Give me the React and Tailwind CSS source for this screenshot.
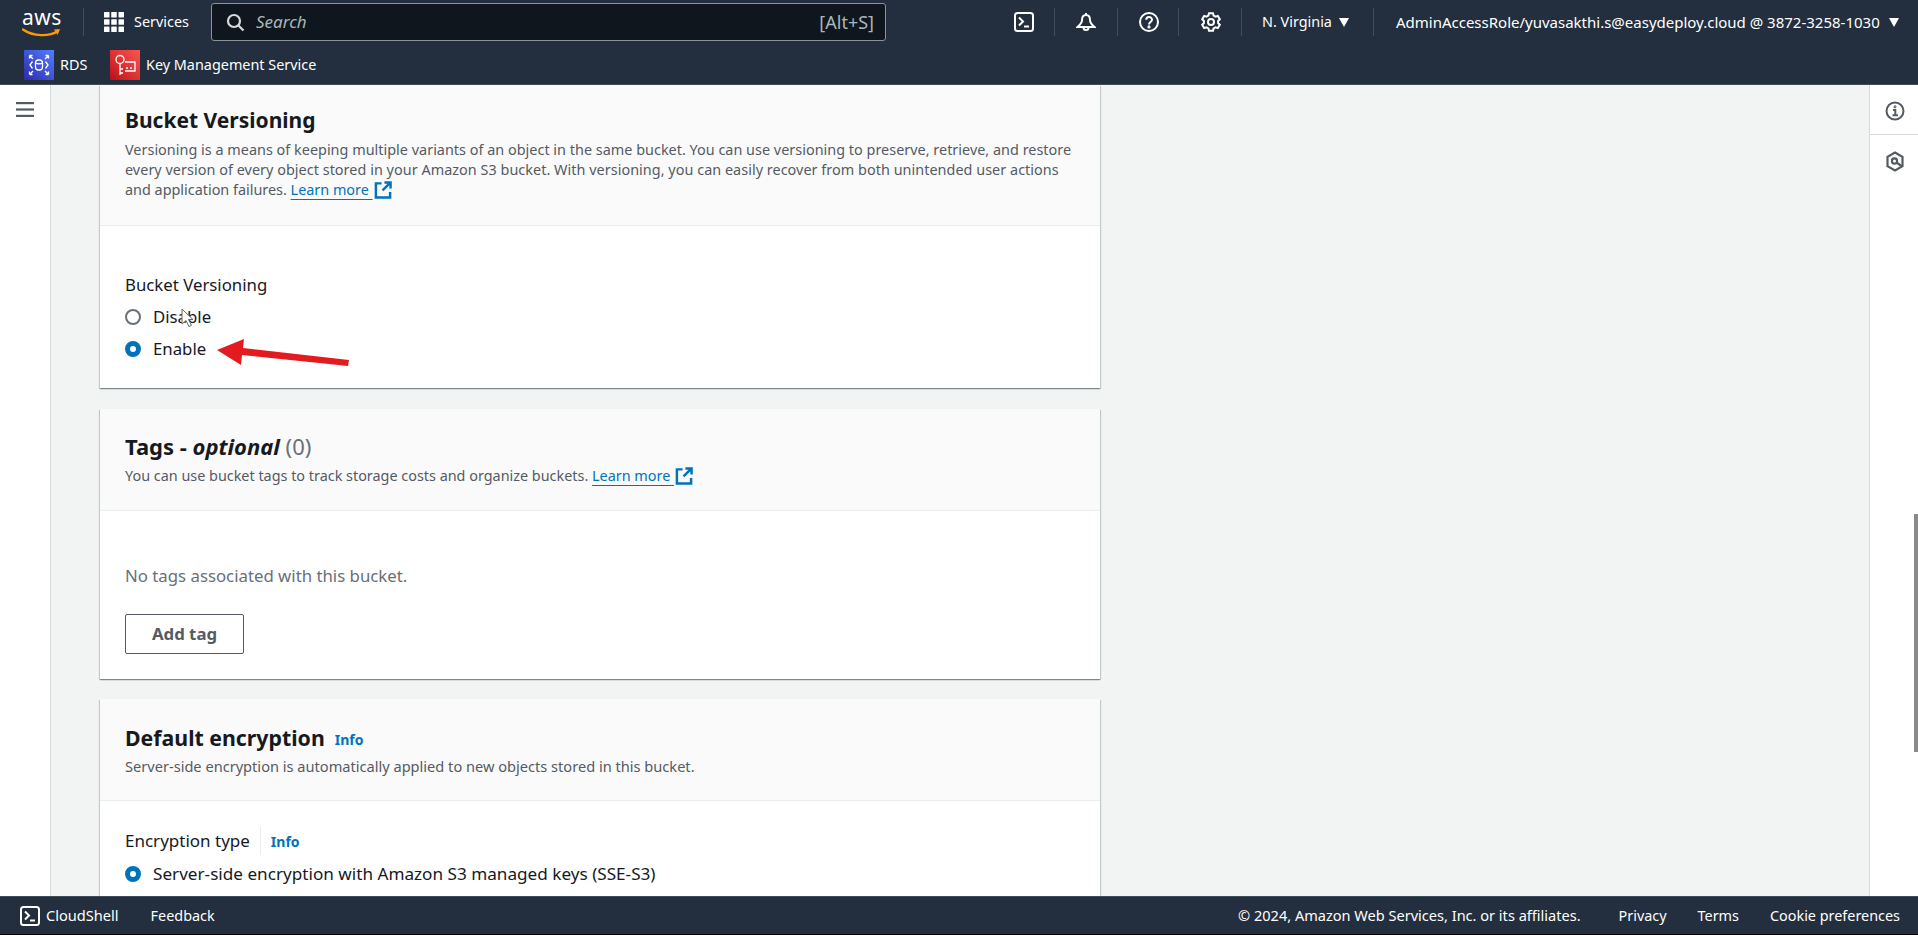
import React from "react";

const font = { fontFamily: '"Noto Sans", sans-serif' };

function ExternalIcon() {
  return (
    <svg width="18" height="18" viewBox="0 0 19 19" fill="none" stroke="#0073bb" strokeWidth="2.6" className="ml-[1px] inline-block shrink-0">
      <path d="M8 2.500H2v15h15v-6" />
      <path d="M11 1.500h6.500V8M17 2l-8 8" />
    </svg>
  );
}

function Radio({ checked }) {
  return checked ? (
    <span className="block w-4 h-4 rounded-full border-[5px] border-[#0073bb] bg-white shrink-0" />
  ) : (
    <span className="block w-4 h-4 rounded-full border-2 border-[#687078] bg-white shrink-0" />
  );
}

function RadioRow({ checked, label, size = "text-[16.8px]" }) {
  return (
    <div className={`flex items-center h-6 gap-[12px] text-[#16191f] ${size}`}>
      <Radio checked={checked} />
      <span className="whitespace-nowrap">{label}</span>
    </div>
  );
}

function Divider() {
  return <div className="w-px h-[28px] bg-[#414d5c]" />;
}

function TerminalIcon({ size = 20 }) {
  return (
    <svg width={size} height={size} viewBox="0 0 20 20" fill="none" stroke="#fff" strokeWidth="2">
      <rect x="1" y="1" width="18" height="18" rx="2.5" />
      <path d="M5 5.500l4 4-4 4M10 14.500h5" />
    </svg>
  );
}

function RdsIcon() {
  return (
    <div className="w-[30px] h-[30px] bg-gradient-to-tr from-[#2e27ad] to-[#527fff] flex items-center justify-center shrink-0">
      <svg width="24" height="24" viewBox="0 0 24 24" fill="none" stroke="#fff" strokeWidth="1.3">
        <rect x="8.500" y="7" width="7" height="10" rx="3" />
        <path d="M8.500 10c1.500 1 5.500 1 7 0" />
        <path d="M5.500 8.500L3 12l2.500 3.500M18.500 8.500L21 12l-2.500 3.500" />
        <path d="M2.500 2.500l3.500 3.500M2.500 2.500h3M2.500 2.500v3M21.500 2.500L18 6M21.500 2.500h-3M21.500 2.500v3M2.500 21.500L6 18M2.500 21.500h3M2.500 21.500v-3M21.500 21.500L18 18M21.500 21.500h-3M21.500 21.500v-3" />
      </svg>
    </div>
  );
}

function KmsIcon() {
  return (
    <div className="w-[30px] h-[30px] bg-gradient-to-tr from-[#bd0816] to-[#ff5252] flex items-center justify-center shrink-0">
      <svg width="24" height="24" viewBox="0 0 24 24" fill="none" stroke="#fff" strokeWidth="1.3">
        <circle cx="7" cy="6.500" r="4" />
        <path d="M7 10.500V22M7 16h3M7 20h3" />
        <path d="M12 9h10v9H12" />
        <path d="M13 15h2M17 15h2" />
      </svg>
    </div>
  );
}

function Caret() {
  return (
    <svg width="10" height="9" viewBox="0 0 10 9" fill="#fff" className="shrink-0">
      <path d="M0 0h10L5 9z" />
    </svg>
  );
}

function TopNav() {
  return (
    <header className="h-[85px] bg-[#232f3e] border-b border-[#3f4b59] shrink-0 text-white text-[14.4px]">
      <div className="h-[44px] flex items-center pl-[22px]">
        <div className="w-[40px] h-[30px] relative shrink-0 flex flex-col items-center">
          <span className="text-[21px] leading-[22px] tracking-[0.5px] -mt-[1px]">aws</span>
          <svg width="40" height="10" viewBox="0 0 40 10" fill="none" className="absolute left-0 top-[21px]">
            <path d="M1 1.500C11 8.500 27 9 36 3" stroke="#ff9900" strokeWidth="2.400" strokeLinecap="round" />
            <path d="M32 1.500l6-.5-2.500 6" fill="#ff9900" />
          </svg>
        </div>
        <div className="w-px h-[28px] bg-[#414d5c] ml-[21px]" />
        <svg width="20" height="20" viewBox="0 0 20 20" fill="#fff" className="ml-[20px] shrink-0">
          <rect x="0" y="0" width="5.500" height="5.500" rx="0.500" /><rect x="7.250" y="0" width="5.500" height="5.500" rx="0.500" /><rect x="14.500" y="0" width="5.500" height="5.500" rx="0.500" />
          <rect x="0" y="7.250" width="5.500" height="5.500" rx="0.500" /><rect x="7.250" y="7.250" width="5.500" height="5.500" rx="0.500" /><rect x="14.500" y="7.250" width="5.500" height="5.500" rx="0.500" />
          <rect x="0" y="14.500" width="5.500" height="5.500" rx="0.500" /><rect x="7.250" y="14.500" width="5.500" height="5.500" rx="0.500" /><rect x="14.500" y="14.500" width="5.500" height="5.500" rx="0.500" />
        </svg>
        <span className="ml-[10px] w-[56px] whitespace-nowrap">Services</span>
        <div className="ml-[21px] w-[675px] h-[38px] bg-[#10161e] border border-[#879596] rounded-[3px] flex items-center pl-[14px] pr-[11px] text-[#aab7b8] text-[17px]">
          <svg width="19" height="19" viewBox="0 0 19 19" fill="none" stroke="#d5dbdb" strokeWidth="2.200" className="shrink-0">
            <circle cx="8" cy="8" r="6" /><path d="M12.500 12.500l5 5" />
          </svg>
          <span className="ml-[11px] italic">Search</span>
          <span className="ml-auto text-[18px]">[Alt+S]</span>
        </div>
        <div className="ml-[128px] flex items-center h-full">
          <TerminalIcon />
          <div className="ml-[20px]"><Divider /></div>
          <svg width="20" height="21" viewBox="0 0 20 21" fill="none" stroke="#fff" strokeWidth="2" className="ml-[21px]">
            <path d="M10 3c-3 0-4 2.500-4 5 0 3-1.500 4.500-4.500 7h17C15.500 12.500 14 11 14 8c0-2.500-1-5-4-5zM10 1v2" />
            <path d="M7.500 15.500a2.500 2.500 0 0 0 5 0" />
          </svg>
          <div className="ml-[21px]"><Divider /></div>
          <svg width="20" height="20" viewBox="0 0 20 20" fill="none" stroke="#fff" strokeWidth="2" className="ml-[21px]">
            <circle cx="10" cy="10" r="9" />
            <path d="M7.200 7.800c0-3.700 5.800-3.700 5.800-.1 0 2.200-3 2.300-3 4.700" />
            <circle cx="10" cy="14.900" r="0.600" />
          </svg>
          <div className="ml-[19px]"><Divider /></div>
          <svg width="20" height="20" viewBox="0 0 20 20" fill="none" stroke="#fff" strokeWidth="2" className="ml-[22px]">
            <circle cx="10" cy="10" r="3" />
            <path d="M8 1.200h4l.6 2.400 1.900 1 2.300-.7 2 3.400-1.700 1.700v2l1.700 1.700-2 3.400-2.300-.7-1.900 1-.6 2.400H8l-.6-2.400-1.900-1-2.300.7-2-3.400 1.700-1.700v-2L1.200 7.300l2-3.400 2.300.7 1.900-1z" />
          </svg>
          <div className="ml-[20px]"><Divider /></div>
          <span className="ml-[20px] whitespace-nowrap">N. Virginia</span>
          <div className="ml-[7px]"><Caret /></div>
          <div className="ml-[24px]"><Divider /></div>
          <span className="ml-[22px] whitespace-nowrap text-[15px]">AdminAccessRole/yuvasakthi.s@easydeploy.cloud @ 3872-3258-1030</span>
          <div className="ml-[9px]"><Caret /></div>
        </div>
      </div>
      <div className="h-[40px] flex items-center pl-[24px] pt-[2px]">
        <RdsIcon />
        <span className="ml-[6px] w-[50px]">RDS</span>
        <KmsIcon />
        <span className="ml-[6px] whitespace-nowrap">Key Management Service</span>
      </div>
    </header>
  );
}

function Card({ children, className = "" }) {
  return (
    <section className={`bg-white w-[1000px] shadow-[0_1px_1px_0_rgba(0,28,36,0.3),1px_1px_1px_0_rgba(0,28,36,0.15),-1px_1px_1px_0_rgba(0,28,36,0.15)] shrink-0 ${className}`}>
      {children}
    </section>
  );
}

function CardTitle({ children, size = "text-[22px]" }) {
  return <h2 className={`leading-[28px] font-bold text-[#16191f] whitespace-nowrap ${size}`}>{children}</h2>;
}

function Learn() {
  return (
    <span className="inline-flex items-center align-top">
      <a className="text-[#0073bb] underline underline-offset-[4px]">Learn more&nbsp;</a>
      <ExternalIcon />
    </span>
  );
}

function App() {
  return (
    <div className="w-[1918px] h-[935px] relative flex flex-col overflow-hidden bg-[#f2f3f3]" style={font}>
      <TopNav />
      <div className="flex-1 flex min-h-0">
        <aside className="w-[51px] bg-white border-r border-[#d5dbdb] shrink-0 pt-[17px] pl-[16px]">
          <svg width="18" height="15" viewBox="0 0 18 15" fill="#545b64">
            <rect y="0" width="18" height="2.200" /><rect y="6.400" width="18" height="2.200" /><rect y="12.800" width="18" height="2.200" />
          </svg>
        </aside>
        <main className="flex-1 min-w-0 pl-[49px] overflow-hidden flex flex-col gap-[20px]">
          <Card className="mb-px">
            <div className="h-[141px] bg-[#fafafa] border-b border-[#eaeded] pt-[21px] px-[25px]">
              <CardTitle size="text-[21px]">Bucket Versioning</CardTitle>
              <p className="mt-[6px] text-[14.4px] leading-[20px] text-[#545b64] whitespace-nowrap">
                <span className="block tracking-[0.02px]">Versioning is a means of keeping multiple variants of an object in the same bucket. You can use versioning to preserve, retrieve, and restore</span>
                <span className="block tracking-[0.04px]">every version of every object stored in your Amazon S3 bucket. With versioning, you can easily recover from both unintended user actions</span>
                <span className="block">and application failures. <Learn /></span>
              </p>
            </div>
            <div className="pt-[48px] pb-[27px] px-[25px]">
              <div className="text-[16.8px] leading-[22px] text-[#16191f]">Bucket Versioning</div>
              <div className="mt-[9px] flex flex-col gap-[8px]">
                <RadioRow label="Disable" />
                <RadioRow checked label="Enable" />
              </div>
            </div>
          </Card>
          <Card>
            <div className="h-[102px] bg-[#fafafa] border-b border-[#eaeded] pt-[23px] px-[25px]">
              <CardTitle>
                Tags - <i>optional</i> <span className="font-normal text-[#687078]">(0)</span>
              </CardTitle>
              <p className="mt-[6px] text-[14.4px] leading-[20px] text-[#545b64] whitespace-nowrap">
                You can use bucket tags to track storage costs and organize buckets. <Learn />
              </p>
            </div>
            <div className="pt-[53px] pb-[25px] px-[25px]">
              <div className="text-[16.8px] leading-6 text-[#687078]">No tags associated with this bucket.</div>
              <button className="mt-[26px] block w-[119px] h-[40px] border border-[#545b64] rounded-[2px] text-[16.8px] font-bold text-[#545b64] bg-white">Add tag</button>
            </div>
          </Card>
          <Card>
            <div className="h-[102px] bg-[#fafafa] border-b border-[#eaeded] pt-[25px] px-[25px]">
              <div className="flex items-center">
                <CardTitle size="text-[21.3px]">Default encryption</CardTitle>
                <a className="ml-[10px] mt-[3px] text-[14px] font-bold text-[#0073bb]">Info</a>
              </div>
              <p className="mt-[4px] text-[14.6px] leading-[20px] text-[#545b64]">Server-side encryption is automatically applied to new objects stored in this bucket.</p>
            </div>
            <div className="pt-[28px] pb-[25px] px-[25px]">
              <div className="flex items-center h-6 text-[17px] text-[#16191f]">
                <span>Encryption type</span>
                <span className="w-px h-[28px] bg-[#eaeded] ml-[10px]" />
                <a className="ml-[10px] text-[14px] font-bold text-[#0073bb]">Info</a>
              </div>
              <div className="mt-[9px]">
                <RadioRow checked size="text-[17.15px]" label="Server-side encryption with Amazon S3 managed keys (SSE-S3)" />
              </div>
            </div>
          </Card>
        </main>
        <aside className="w-[49px] bg-white border-l border-[#d5dbdb] shrink-0 flex flex-col pl-px">
          <div className="h-[50px] border-b border-[#d5dbdb] -ml-px flex items-center justify-center pl-px pt-[2px]">
            <svg width="20" height="20" viewBox="0 0 20 20" fill="none" stroke="#545b64" strokeWidth="2">
              <circle cx="10" cy="10" r="8.500" />
              <path d="M8 9h2.300v5M7.500 14.300h5.500" />
              <circle cx="10" cy="5.800" r="0.500" />
            </svg>
          </div>
          <div className="h-[52px] flex items-center justify-center">
            <svg width="20" height="21" viewBox="0 0 20 21" fill="none" stroke="#545b64" strokeWidth="2.200">
              <path d="M10 1.500l7.500 4.400v9.200L10 19.500l-7.500-4.400V5.900z" />
              <circle cx="9.500" cy="10" r="2.600" />
              <path d="M11.500 11.500l5 3.500" />
            </svg>
          </div>
        </aside>
      </div>
      <footer className="h-[39px] bg-[#232f3e] border-t border-[#3f4b59] border-b border-b-black shrink-0 flex items-center text-white text-[14.4px] pl-[20px] pr-[18px]">
        <TerminalIcon />
        <span className="ml-[6px] text-[14.6px]">CloudShell</span>
        <span className="ml-[32px]">Feedback</span>
        <span className="ml-auto text-[14.55px]">© 2024, Amazon Web Services, Inc. or its affiliates.</span>
        <span className="ml-[38px]">Privacy</span>
        <span className="ml-[31px]">Terms</span>
        <span className="ml-[31px]">Cookie preferences</span>
      </footer>

      {/* annotation arrow and mouse pointer lying over the page */}
      <svg width="140" height="40" viewBox="0 0 140 40" className="absolute left-[214px] top-[332px] pointer-events-none">
        <path d="M3 18L30 7l-1 9 106 12-1 6-106-11-1 10z" fill="#e31b1f" />
      </svg>
      <svg width="14" height="20" viewBox="0 0 14 20" className="absolute left-[181px] top-[308px] pointer-events-none">
        <path d="M1 1v15l4-3.500 3 6 2.500-1.200-3-5.800H12z" fill="#fff" stroke="#666" strokeWidth="1" />
      </svg>
      {/* page scrollbar thumb */}
      <div className="absolute right-0 top-[514px] w-[4px] h-[238px] bg-[#8a8a8a]" />
    </div>
  );
}

export default App;
